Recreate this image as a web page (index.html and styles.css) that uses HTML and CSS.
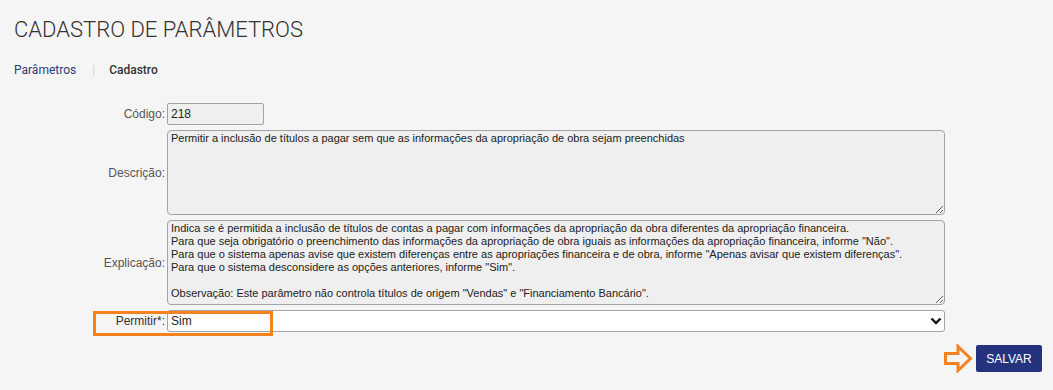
FILE: index.html
```html
<!DOCTYPE html>
<html lang="pt-BR">
<head>
  <meta charset="UTF-8" />
  <meta name="viewport" content="width=device-width, initial-scale=1.0"/>
  <title>Cadastro de Parâmetros</title>
  <link rel="stylesheet" href="styles.css">
</head>
<body>

<header class="page-head">
  <h1>CADASTRO DE PARÂMETROS</h1>
  <nav class="crumbs">
    <a href="#">Parâmetros</a>
    <span class="sep">|</span>
    <span class="current">Cadastro</span>
  </nav>
</header>

<form class="param-form">
  <label for="codigo">Código:</label>
  <input type="text" id="codigo" class="code" value="218" readonly>

  <label for="descricao">Descrição:</label>
  <textarea id="descricao" readonly>Permitir a inclusão de títulos a pagar sem que as informações da apropriação de obra sejam preenchidas</textarea>

  <label for="explicacao">Explicação:</label>
  <textarea id="explicacao" readonly>Indica se é permitida a inclusão de títulos de contas a pagar com informações da apropriação da obra diferentes da apropriação financeira.
Para que seja obrigatório o preenchimento das informações da apropriação de obra iguais as informações da apropriação financeira, informe "Não".
Para que o sistema apenas avise que existem diferenças entre as apropriações financeira e de obra, informe "Apenas avisar que existem diferenças".
Para que o sistema desconsidere as opções anteriores, informe "Sim".

Observação: Este parâmetro não controla títulos de origem "Vendas" e "Financiamento Bancário".</textarea>

  <label for="permitir" class="strong">Permitir*:</label>
  <div class="select-wrap">
    <select id="permitir">
      <option>Sim</option>
      <option>Não</option>
      <option>Apenas avisar que existem diferenças</option>
    </select>
    <svg class="chevron" width="12" height="8" viewBox="0 0 12 8"><path d="M1.5 1.5 L6 6 L10.5 1.5" fill="none" stroke="#111" stroke-width="2.4"/></svg>
  </div>
  <div class="highlight"></div>

  <div class="actions">
    <svg class="arrow" width="30" height="29" viewBox="0 0 30 29"><path d="M2.5 9.5 H15 V2.5 L27.5 14.5 L15 26.5 V19.5 H2.5 Z" fill="none" stroke="#f58220" stroke-width="3" stroke-linejoin="miter"/></svg>
    <button type="button">SALVAR</button>
  </div>
</form>

</body>
</html>
```

FILE: styles.css
```css
* {
  box-sizing: border-box;
}

body {
  margin: 0;
  padding: 0 11px 0 14px;
  background: #f5f5f5;
  font-family: "Liberation Sans", Arial, sans-serif;
  font-size: 12px;
  color: #222;
}

.page-head h1 {
  margin: 0;
  padding-top: 16px;
  font-family: Roboto, sans-serif;
  font-weight: 300;
  font-size: 22px;
  line-height: 28px;
  color: #333;
}

.crumbs {
  margin-top: 18px;
  font-family: Roboto, sans-serif;
  font-size: 12px;
  line-height: 16px;
  display: flex;
  align-items: center;
}

.crumbs a {
  color: #2e3a78;
  text-decoration: none;
}

.crumbs .sep {
  color: #d0d0d0;
  margin: 0 14px 0 16px;
}

.crumbs .current {
  color: #333;
  font-weight: 500;
}

.param-form {
  position: relative;
  margin-top: 25px;
  display: grid;
  grid-template-columns: 151px 1fr;
  column-gap: 2px;
  row-gap: 5px;
  align-items: center;
}

.param-form label {
  text-align: right;
  color: #555;
  font-size: 12px;
}

.param-form label.strong {
  color: #333;
}

input.code {
  width: 97px;
  height: 22px;
  padding: 1px 3px;
  border: 1px solid #a3a3a3;
  border-radius: 2px;
  background: #efefef;
  font-family: inherit;
  font-size: 12px;
  color: #222;
  outline: none;
}

textarea {
  width: 778px;
  height: 85px;
  padding: 1px 3px;
  border: 1px solid #a3a3a3;
  border-radius: 4px;
  background: #efefef;
  font-family: inherit;
  font-size: 11px;
  line-height: 13px;
  color: #222;
  outline: none;
  resize: vertical;
}

.select-wrap {
  position: relative;
  width: 778px;
}

select {
  appearance: none;
  -webkit-appearance: none;
  width: 100%;
  height: 22px;
  padding: 0 3px;
  border: 1px solid #a3a3a3;
  border-radius: 3px;
  background: #fff;
  font-family: inherit;
  font-size: 12px;
  color: #222;
  outline: none;
}

.chevron {
  position: absolute;
  right: 3px;
  top: 7px;
  pointer-events: none;
}

.highlight {
  position: absolute;
  left: 79px;
  bottom: 37px;
  width: 180px;
  height: 25px;
  border: 3px solid #f58220;
  pointer-events: none;
}

.actions {
  grid-column: 1 / -1;
  display: flex;
  justify-content: flex-end;
  align-items: center;
  gap: 3px;
  margin-top: 7px;
}

.arrow {
  display: block;
}

button {
  width: 66px;
  height: 27px;
  background: #25337f;
  color: #fff;
  border: none;
  border-radius: 2px;
  font-family: inherit;
  font-size: 12px;
  cursor: pointer;
}

button:hover {
  background: #1b2766;
}
```
